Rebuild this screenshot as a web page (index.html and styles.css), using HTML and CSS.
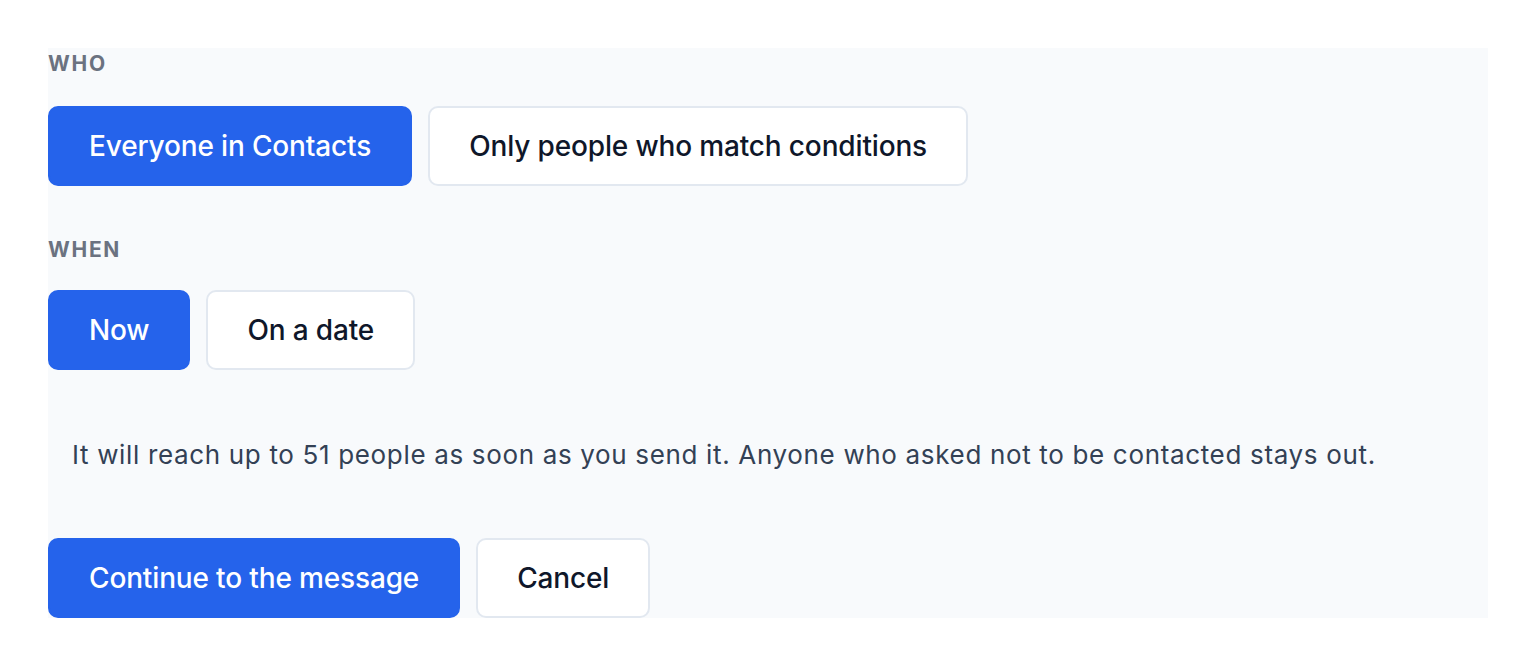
FILE: index.html
```html
<!DOCTYPE html>
<html lang="en">
<head>
<meta charset="utf-8">
<title>Audience</title>
<link rel="stylesheet" href="styles.css">
</head>
<body>
<main class="panel">
  <section class="group">
    <h2 class="label">WHO</h2>
    <div class="options">
      <button class="btn btn-primary">Everyone in Contacts</button>
      <button class="btn btn-secondary">Only people who match conditions</button>
    </div>
  </section>
  <section class="group group-when">
    <h2 class="label">WHEN</h2>
    <div class="options">
      <button class="btn btn-primary">Now</button>
      <button class="btn btn-secondary">On a date</button>
    </div>
  </section>
  <p class="summary">It will reach up to 51 people as soon as you send it. Anyone who asked not to be contacted stays out.</p>
  <div class="actions">
    <button class="btn btn-primary">Continue to the message</button>
    <button class="btn btn-secondary">Cancel</button>
  </div>
</main>
</body>
</html>
```

FILE: styles.css
```css
* { box-sizing: border-box; }
html, body { margin: 0; background: #ffffff; }
body {
  padding: 48px;
  font-family: Inter, "Liberation Sans", sans-serif;
  color: #0f172a;
}
.panel {
  background: #f8fafc;
  display: flex;
  flex-direction: column;
}
.label {
  margin: 0;
  font-size: 21px;
  line-height: 32px;
  font-weight: 700;
  letter-spacing: 1.7px;
  color: #6b7280;
}
.options {
  display: flex;
  gap: 16px;
  margin-top: 26px;
}
.group-when { margin-top: 48px; }
.group-when .options { margin-top: 24px; }
.btn {
  height: 80px;
  padding: 0 39px;
  border-radius: 10px;
  font-family: inherit;
  font-size: 28px;
  font-weight: 500;
  letter-spacing: -0.15px;
  border: 2px solid transparent;
  cursor: pointer;
}
.btn-primary {
  background: #2563eb;
  border-color: #2563eb;
  color: #ffffff;
}
.btn-secondary {
  background: #ffffff;
  border-color: #e2e8f0;
  color: #0f172a;
}
.summary {
  margin: 64px 0 0;
  padding: 0 24px;
  font-size: 26px;
  line-height: 42px;
  letter-spacing: 0.66px;
  color: #334155;
}
.actions {
  display: flex;
  gap: 16px;
  margin-top: 62px;
}
```
